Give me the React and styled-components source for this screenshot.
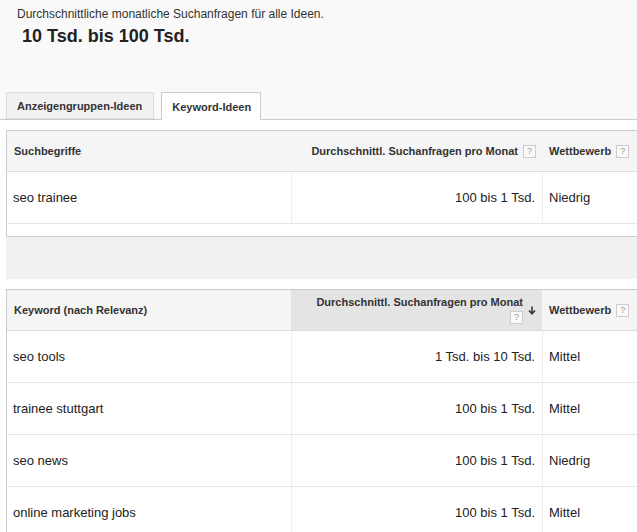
import React from "react";
import styled, { createGlobalStyle } from "styled-components";

const GlobalStyle = createGlobalStyle`
  html, body {
    margin: 0;
    padding: 0;
    overflow: hidden;
    background: #ffffff;
    font-family: "Liberation Sans", Arial, sans-serif;
    color: #222;
  }
`;

const Page = styled.div`
  width: 637px;
  height: 532px;
  overflow: hidden;
  background: #fff;
`;

const Summary = styled.div`
  background: #f9f9f9;
  padding: 6px 0 0 0;
`;

const SummaryLabel = styled.div`
  font-size: 12px;
  line-height: 16px;
  color: #333;
  padding-left: 17px;
`;

const SummaryValue = styled.div`
  font-size: 18px;
  font-weight: bold;
  line-height: 20px;
  color: #222;
  padding: 4px 0 0 22px;
  height: 66px;
`;

const TabBar = styled.div`
  display: flex;
  gap: 7px;
  padding-left: 6px;
  border-bottom: 1px solid #ccc;
  height: 27px;
  align-items: flex-end;
`;

const Tab = styled.div`
  height: ${(p) => (p.$active ? "28px" : "27px")};
  box-sizing: border-box;
  margin-bottom: ${(p) => (p.$active ? "-1px" : "0")};
  padding: 0 ${(p) => (p.$active ? "9px" : "11px")} 0 10px;
  display: flex;
  align-items: center;
  font-size: 11px;
  font-weight: bold;
  color: #333;
  background: ${(p) => (p.$active ? "#fff" : "#f1f1f1")};
  border: 1px solid ${(p) => (p.$active ? "#ccc" : "#ddd")};
  border-bottom: ${(p) => (p.$active ? "none" : "1px solid #ddd")};
`;

const Content = styled.div`
  padding: 10px 0 0 6px;
`;

const Card = styled.div`
  width: 660px;
  border: 1px solid #ccc;
  background: #fff;
`;

const Grid = styled.div`
  display: grid;
  grid-template-columns: 284px 251px 1fr;
`;

const HeadCell = styled.div`
  height: 41px;
  box-sizing: border-box;
  background: ${(p) => (p.$sorted ? "#e4e4e4" : "#f5f5f5")};
  border-bottom: 1px solid #ddd;
  display: flex;
  align-items: center;
  justify-content: ${(p) => (p.$right ? "flex-end" : "flex-start")};
  padding: ${(p) => (p.$right ? "0 6px 0 8px" : "0 8px 0 7px")};
  font-size: 11px;
  font-weight: bold;
  color: #333;
  gap: 5px;
`;

const HeadStack = styled.div`
  display: flex;
  flex-direction: column;
  align-items: flex-end;
  gap: 3px;
`;

const Help = styled.span`
  display: inline-flex;
  align-items: center;
  justify-content: center;
  width: 11px;
  height: 11px;
  border: 1px solid #ccc;
  background: #fafafa;
  color: #999;
  font-size: 9px;
  font-weight: normal;
  line-height: 1;
`;

const Cell = styled.div`
  height: 52px;
  box-sizing: border-box;
  border-bottom: 1px solid #e5e5e5;
  border-left: ${(p) => (p.$first ? "none" : "1px solid #eee")};
  display: flex;
  align-items: center;
  justify-content: ${(p) => (p.$right ? "flex-end" : "flex-start")};
  padding: ${(p) => (p.$right ? "0 7px 0 8px" : "0 6px 0 6px")};
  font-size: 13px;
  color: #222;
`;

const Spacer = styled.div`
  height: 12px;
`;

const Band = styled.div`
  height: 42px;
  background: #f1f1f1;
  margin-bottom: 10px;
  width: 660px;
`;

const Arrow = () => (
  <svg width="8" height="9" viewBox="0 0 8 9">
    <path d="M4 0.5V7.5" stroke="#333" strokeWidth="1.6" />
    <path d="M1 4.5L4 7.8L7 4.5" stroke="#333" strokeWidth="1.6" fill="none" />
  </svg>
);

const seedRows = [["seo trainee", "100 bis 1 Tsd.", "Niedrig"]];
const ideaRows = [
  ["seo tools", "1 Tsd. bis 10 Tsd.", "Mittel"],
  ["trainee stuttgart", "100 bis 1 Tsd.", "Mittel"],
  ["seo news", "100 bis 1 Tsd.", "Niedrig"],
  ["online marketing jobs", "100 bis 1 Tsd.", "Mittel"],
];

const Rows = ({ rows }) =>
  rows.map(([k, v, c]) => (
    <React.Fragment key={k}>
      <Cell $first>{k}</Cell>
      <Cell $right>{v}</Cell>
      <Cell>{c}</Cell>
    </React.Fragment>
  ));

export default function App() {
  return (
    <Page>
      <GlobalStyle />
      <Summary>
        <SummaryLabel>Durchschnittliche monatliche Suchanfragen für alle Ideen.</SummaryLabel>
        <SummaryValue>10 Tsd. bis 100 Tsd.</SummaryValue>
        <TabBar>
          <Tab>Anzeigengruppen-Ideen</Tab>
          <Tab $active>Keyword-Ideen</Tab>
        </TabBar>
      </Summary>
      <Content>
        <Card>
          <Grid>
            <HeadCell>Suchbegriffe</HeadCell>
            <HeadCell $right>
              Durchschnittl. Suchanfragen pro Monat <Help>?</Help>
            </HeadCell>
            <HeadCell>
              Wettbewerb <Help>?</Help>
            </HeadCell>
            <Rows rows={seedRows} />
          </Grid>
          <Spacer />
        </Card>
        <Band />
        <Card>
          <Grid>
            <HeadCell>Keyword (nach Relevanz)</HeadCell>
            <HeadCell $right $sorted>
              <HeadStack>
                <span>Durchschnittl. Suchanfragen pro Monat</span>
                <Help>?</Help>
              </HeadStack>
              <Arrow />
            </HeadCell>
            <HeadCell>
              Wettbewerb <Help>?</Help>
            </HeadCell>
            <Rows rows={ideaRows} />
          </Grid>
        </Card>
      </Content>
    </Page>
  );
}
